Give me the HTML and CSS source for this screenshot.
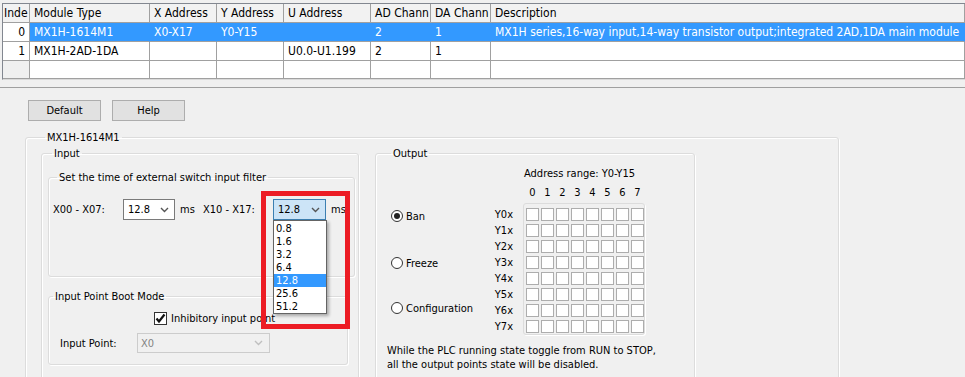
FILE: index.html
```html
<!DOCTYPE html>
<html lang="en">
  <head>
    <meta charset="UTF-8" />
    <title>Module Configuration</title>
    <link rel="stylesheet" href="styles.css">
  </head>
  <body>
    <div class="grid-wrap">
      <table class="module-grid">
        <thead>
          <tr>
            <th class="c-index">Inde</th>
            <th class="c-type">Module Type</th>
            <th class="c-addr">X Address</th>
            <th class="c-addr">Y Address</th>
            <th class="c-uaddr">U Address</th>
            <th class="c-chan">AD Chann</th>
            <th class="c-chan">DA Chann</th>
            <th>Description</th>
          </tr>
        </thead>
        <tbody>
          <tr class="selected">
            <td class="idx">0</td>
            <td>MX1H-1614M1</td>
            <td>X0-X17</td>
            <td>Y0-Y15</td>
            <td></td>
            <td>2</td>
            <td>1</td>
            <td>MX1H series,16-way input,14-way transistor output;integrated 2AD,1DA main module</td>
          </tr>
          <tr>
            <td class="idx">1</td>
            <td>MX1H-2AD-1DA</td>
            <td></td>
            <td></td>
            <td>U0.0-U1.199</td>
            <td>2</td>
            <td>1</td>
            <td></td>
          </tr>
          <tr class="empty">
            <td class="idx"></td><td></td><td></td><td></td><td></td><td></td><td></td><td></td>
          </tr>
          <tr class="empty">
            <td class="idx"></td><td></td><td></td><td></td><td></td><td></td><td></td><td></td>
          </tr>
        </tbody>
      </table>
    </div>
    <div class="split"></div>

    <main class="panel">
      <div class="toolbar">
        <button type="button" class="btn">Default</button>
        <button type="button" class="btn">Help</button>
      </div>

      <fieldset class="group module">
        <legend>MX1H-1614M1</legend>
        <div class="module-body">
          <!-- Input side -->
          <fieldset class="group input-group">
            <legend>Input</legend>

            <fieldset class="group filter">
              <legend>Set the time of external switch input filter</legend>
              <div class="filter-row">
                <span class="lbl">X00 - X07:</span>
                <span class="combo">
                  <span>12.8</span>
                  <svg class="chev" width="9" height="6" viewBox="0 0 9 6"><polyline points="1,1 4.5,4.5 8,1" /></svg>
                </span>
                <span class="unit">ms</span>
                <span class="lbl">X10 - X17:</span>
                <span class="combo-wrap">
                  <span class="combo focused">
                    <span>12.8</span>
                    <svg class="chev" width="9" height="6" viewBox="0 0 9 6"><polyline points="1,1 4.5,4.5 8,1" /></svg>
                  </span>
                  <ul class="dropdown">
                    <li>0.8</li>
                    <li>1.6</li>
                    <li>3.2</li>
                    <li>6.4</li>
                    <li class="active">12.8</li>
                    <li>25.6</li>
                    <li>51.2</li>
                  </ul>
                  <span class="highlight-box"></span>
                </span>
                <span class="unit">ms</span>
              </div>
            </fieldset>

            <fieldset class="group boot">
              <legend>Input Point Boot Mode</legend>
              <label class="check-row">
                <span class="check">
                  <svg width="11" height="11" viewBox="0 0 11 11"><polyline points="1.5,5.5 4,8.5 9.5,1.5" /></svg>
                </span>
                Inhibitory input point
              </label>
              <div class="point-row">
                <span class="lbl">Input Point:</span>
                <span class="combo disabled">
                  <span>X0</span>
                  <svg class="chev" width="9" height="6" viewBox="0 0 9 6"><polyline points="1,1 4.5,4.5 8,1" /></svg>
                </span>
              </div>
            </fieldset>
          </fieldset>

          <!-- Output side -->
          <fieldset class="group output-group">
            <legend>Output</legend>
            <div class="out-grid">
              <div class="range">Address range: Y0-Y15</div>
              <div class="digits">
                <span>0</span><span>1</span><span>2</span><span>3</span>
                <span>4</span><span>5</span><span>6</span><span>7</span>
              </div>
              <div class="modes">
                <label class="radio"><span class="dot checked"></span>Ban</label>
                <label class="radio freeze"><span class="dot"></span>Freeze</label>
                <label class="radio config"><span class="dot"></span>Configuration</label>
              </div>
              <div class="ylabels">
                <div>Y0x</div><div>Y1x</div><div>Y2x</div><div>Y3x</div>
                <div>Y4x</div><div>Y5x</div><div>Y6x</div><div>Y7x</div>
              </div>
              <div class="matrix" id="matrix"></div>
            </div>
            <p class="note">
              While the PLC running state toggle from RUN to STOP,<br>
              all the output points state will be disabled.
            </p>
          </fieldset>
        </div>
      </fieldset>
    </main>

    <script>
      // Build the 8x8 output point grid
      const matrix = document.getElementById("matrix");
      for (let i = 0; i < 64; i++) {
        const cell = document.createElement("span");
        cell.className = "cell";
        matrix.appendChild(cell);
      }
    </script>
  </body>
</html>
```

FILE: styles.css
```css
* {
  margin: 0;
  padding: 0;
  box-sizing: border-box;
}

html {
  overflow: hidden;
}

body {
  font-family: "DejaVu Sans Condensed", "Liberation Sans", sans-serif;
  font-size: 11px;
  line-height: 13px;
  color: #000;
  background-color: #f0f0f0;
}

/* Module table */
.grid-wrap {
  margin: 3px 0 0 2px;
  height: 77px;
  overflow: hidden;
  background-color: #fff;
  border-top: 1px solid #828790;
  border-left: 1px solid #828790;
  border-bottom: 1px solid #d9d9d9;
}

.module-grid {
  width: 100%;
  border-spacing: 0;
  table-layout: fixed;
  font-size: 12px;
}

.module-grid th,
.module-grid td {
  height: 18px;
  padding: 0 4px;
  line-height: 18px;
  text-align: left;
  font-weight: normal;
  white-space: nowrap;
  overflow: hidden;
  border-right: 1px solid #a0a0a0;
  border-bottom: 1px solid #a0a0a0;
}

.module-grid th {
  background-color: #f2f2f2;
}

.module-grid th.c-index {
  padding-left: 1px;
  padding-right: 0;
}

.c-index {
  width: 27px;
}

.c-type {
  width: 120px;
}

.c-addr {
  width: 67px;
}

.c-uaddr {
  width: 87px;
}

.c-chan {
  width: 60px;
}

.module-grid td.idx {
  text-align: right;
  padding-right: 4px;
}

.selected td:not(.idx) {
  background-color: #3399ff;
  border-right-color: #3399ff;
  color: #fff;
}

.empty td.idx {
  background-color: #f0f0f0;
}

.split {
  height: 8px;
  border-bottom: 1px solid #a0a0a0;
}

/* Lower panel */
.panel {
  padding: 12px 0 0 25px;
}

.toolbar {
  display: flex;
  gap: 11px;
  margin-left: 3px;
}

.btn {
  width: 73px;
  height: 21px;
  background-color: #e1e1e1;
  border: 1px solid #adadad;
  font: inherit;
  color: #000;
}

.group {
  border: 1px solid #dcdcdc;
  border-radius: 3px;
  box-shadow: inset 1px 1px 0 #fff, 1px 1px 0 #fff;
}

.group legend {
  margin-left: 4px;
  padding: 0 2px;
  line-height: 13px;
}

.module {
  width: 814px;
  margin-top: 10px;
  padding: 3px 0 0 15px;
}

.module-body {
  display: flex;
  gap: 16px;
  align-items: flex-start;
}

.input-group {
  width: 318px;
  padding: 11px 0 40px 6px;
}

.filter,
.boot {
  width: 300px;
}

.filter {
  padding: 15px 0 56px 4px;
}

.filter-row {
  display: flex;
  align-items: center;
  height: 21px;
}

.filter-row .lbl {
  width: 70px;
}

.unit {
  width: 28px;
  padding-left: 5px;
}

.combo {
  display: flex;
  align-items: center;
  justify-content: space-between;
  width: 52px;
  height: 21px;
  padding: 0 5px 0 4px;
  background-color: #fff;
  border: 1px solid #7a7a7a;
}

.chev polyline {
  fill: none;
  stroke: #555;
  stroke-width: 1.4;
}

.combo-wrap {
  position: relative;
  display: block;
}

.combo.focused {
  width: 53px;
  background-color: #cce4f7;
  border-color: #3c7fb1;
}

.dropdown {
  position: absolute;
  left: 0;
  top: 100%;
  width: 54px;
  padding-top: 1px;
  list-style: none;
  background-color: #fff;
  border: 1px solid #646464;
  box-shadow: 2px 2px 3px rgba(0, 0, 0, 0.3);
  z-index: 2;
}

.dropdown li {
  height: 13px;
  line-height: 13px;
  padding-left: 2px;
}

.dropdown li.active {
  background-color: #3399ff;
  color: #fff;
}

.highlight-box {
  position: absolute;
  left: -12px;
  top: -8px;
  width: 89px;
  height: 138px;
  border: 5px solid #ec1c24;
  z-index: 3;
  pointer-events: none;
}

.boot {
  margin-top: 13px;
  padding: 8px 0 11px 0;
}

.check-row {
  display: flex;
  align-items: center;
  gap: 4px;
  height: 14px;
  padding-left: 105px;
}

.check {
  display: flex;
  align-items: center;
  justify-content: center;
  width: 13px;
  height: 13px;
  background-color: #fff;
  border: 1px solid #333;
}

.check polyline {
  fill: none;
  stroke: #111;
  stroke-width: 2.2;
}

.point-row {
  display: flex;
  align-items: center;
  margin-top: 8px;
  padding-left: 11px;
}

.point-row .lbl {
  width: 77px;
}

.combo.disabled {
  width: 133px;
  height: 20px;
  padding-left: 3px;
  padding-right: 6px;
  background-color: #f0f0f0;
  border-color: #cccccc;
  color: #838383;
}

.combo.disabled .chev polyline {
  stroke: #bfbfbf;
}

/* Output side */
.output-group {
  width: 320px;
  padding: 7px 0 40px 11px;
}

.out-grid {
  display: grid;
  grid-template-columns: 100px 32px 122px;
  margin-left: 4px;
}

.range {
  grid-column: 3;
  grid-row: 1;
  line-height: 14px;
  padding-left: 1px;
}

.digits {
  grid-column: 3;
  grid-row: 2;
  display: flex;
  gap: 2px;
  margin-top: 5px;
  padding-left: 3px;
  line-height: 14px;
}

.digits span {
  width: 13px;
  text-align: center;
}

.modes {
  grid-column: 1;
  grid-row: 3;
  display: flex;
  flex-direction: column;
  padding-top: 9px;
}

.radio {
  display: flex;
  align-items: center;
  gap: 3px;
  height: 14px;
}

.radio.freeze {
  margin-top: 33px;
}

.radio.config {
  margin-top: 31px;
}

.dot {
  display: flex;
  align-items: center;
  justify-content: center;
  width: 12px;
  height: 12px;
  border: 1px solid #333;
  border-radius: 50%;
  background-color: #fff;
}

.dot.checked::after {
  content: "";
  width: 6px;
  height: 6px;
  border-radius: 50%;
  background-color: #222;
}

.ylabels {
  grid-column: 2;
  grid-row: 3;
  padding-top: 7px;
  padding-right: 10px;
  text-align: right;
  line-height: 16px;
}

.matrix {
  grid-column: 3;
  grid-row: 3;
  display: grid;
  grid-template-columns: repeat(8, 13px);
  gap: 3px 2px;
  margin-top: 3px;
  padding: 4px 0 1px 2px;
  border: 1px solid #dcdcdc;
  border-radius: 3px;
  box-shadow: 1px 1px 0 #fff;
}

.cell {
  width: 13px;
  height: 13px;
  background-color: #fff;
  border: 1px solid #adadad;
}

.note {
  margin-top: 9px;
  line-height: 14px;
  white-space: nowrap;
}
```
